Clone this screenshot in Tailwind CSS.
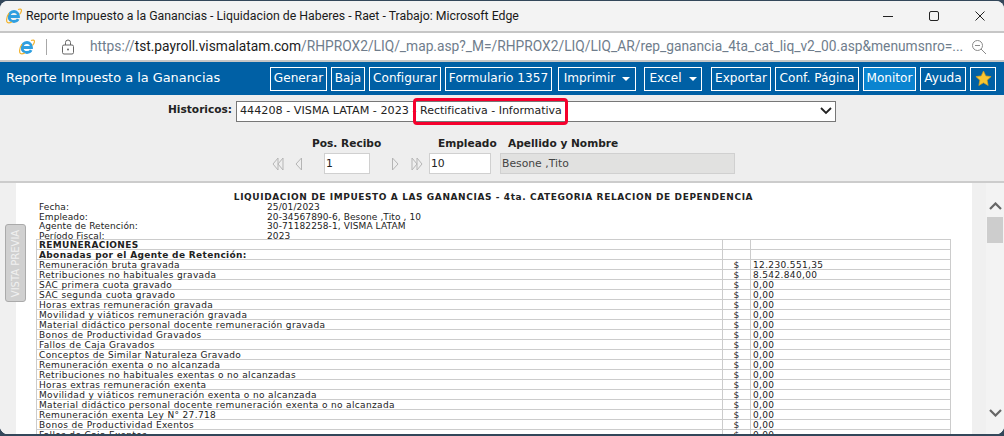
<!DOCTYPE html>
<html lang="es">
<head>
  <meta charset="UTF-8" />
  <title>Reporte Impuesto a la Ganancias</title>
  <script src="https://cdn.jsdelivr.net/npm/@tailwindcss/browser@4"></script>
</head>
<body class="bg-[#33475a] overflow-hidden">
  <div class="w-[1004px] h-[436px] pt-[1px] pb-[2px] overflow-hidden">
    <div class="relative h-full flex flex-col bg-white rounded-[8px] overflow-hidden font-['DejaVu_Sans',sans-serif]">

      <!-- Title bar -->
      <div class="h-[30px] shrink-0 bg-[#f3f3f3] flex items-center pl-[6px] font-['Roboto',sans-serif] text-[12.3px] text-[#1a1a1a]">
        <svg class="w-[16px] h-[16px] mr-[4px] shrink-0" viewBox="0 0 16 16" fill="none">
          <path d="M3 8.500h9.500C12.500 5.500 10.500 3.500 8 3.500S3.200 5.500 3 8.500c-.1 3 2 5 5 5 2 0 3.400-.8 4.200-2.300" stroke="#2f9fe0" stroke-width="2.800"/>
          <path d="M12 1.500c2-.8 3.500-.5 3.500 1 0 1-.8 2.500-2 4M3 5C1 8 .2 11 .8 13.500c.6 2 3 1.500 5 .5" stroke="#f2b431" stroke-width="1.200"/>
        </svg>
        <span class="whitespace-nowrap">Reporte Impuesto a la Ganancias - Liquidacion de Haberes - Raet - Trabajo: Microsoft Edge</span>
        <div class="ml-auto flex items-center gap-[34px] mr-[18px]">
          <svg class="w-[12px] h-[12px]" viewBox="0 0 12 12"><path d="M1 6.500h10" stroke="#222" stroke-width="1"/></svg>
          <svg class="w-[12px] h-[12px]" viewBox="0 0 12 12" fill="none"><rect x="1.500" y="1.500" width="9" height="9" rx="1.500" stroke="#222"/></svg>
          <svg class="w-[12px] h-[12px]" viewBox="0 0 12 12"><path d="M1.500 1.500l9 9M10.500 1.500l-9 9" stroke="#222"/></svg>
        </div>
      </div>

      <!-- Address bar -->
      <div class="h-[31px] shrink-0 bg-white border-y-2 border-[#c6c6c6] flex items-center font-['Roboto',sans-serif] text-[13.77px] text-[#6f7d8c]">
        <svg class="w-[16px] h-[16px] ml-[19px] shrink-0" viewBox="0 0 16 16" fill="none">
          <path d="M3 8.500h9.500C12.500 5.500 10.500 3.500 8 3.500S3.200 5.500 3 8.500c-.1 3 2 5 5 5 2 0 3.400-.8 4.200-2.300" stroke="#2f9fe0" stroke-width="2.800"/>
          <path d="M12 1.500c2-.8 3.500-.5 3.500 1 0 1-.8 2.500-2 4M3 5C1 8 .2 11 .8 13.500c.6 2 3 1.500 5 .5" stroke="#f2b431" stroke-width="1.200"/>
        </svg>
        <div class="w-px h-[16px] bg-[#a8a8a8] ml-[11px] shrink-0"></div>
        <svg class="w-[14px] h-[16px] ml-[14px] shrink-0" viewBox="0 0 14 16" fill="none">
          <rect x="1.500" y="6" width="11" height="9" rx="1.500" stroke="#666"/>
          <path d="M4.500 6V3.500a2.500 2.500 0 0 1 5 0V6" stroke="#666"/>
          <circle cx="7" cy="10.500" r="1" fill="#666"/>
        </svg>
        <span class="ml-[15px] w-[870px] shrink-0 whitespace-nowrap">https://<span class="text-[#1c1c1c]">tst.payroll.vismalatam.com</span>/RHPROX2/LIQ/_map.asp?_M=/RHPROX2/LIQ/LIQ_AR/rep_ganancia_4ta_cat_liq_v2_00.asp&amp;menumsnro=...</span>
        <svg class="w-[16px] h-[16px] ml-auto mr-[17px] shrink-0" viewBox="0 0 16 16" fill="none">
          <circle cx="6.500" cy="6.500" r="5" stroke="#8a8a8a"/>
          <path d="M10 10l5 5M4 6.500h5" stroke="#8a8a8a"/>
        </svg>
      </div>

      <!-- Blue toolbar -->
      <div class="h-[33px] shrink-0 bg-[#0060a5] flex items-center pl-[6px] text-white">
        <span class="text-[12.9px] w-[264px] shrink-0 -mt-[1px] whitespace-nowrap">Reporte Impuesto a la Ganancias</span>
        <div class="flex items-center text-[12.1px] [&>div]:h-[24px] [&>div]:shrink-0 [&>div]:border [&>div]:border-white [&>div]:flex [&>div]:items-center [&>div]:justify-center [&>div]:whitespace-nowrap">
          <div class="w-[57px]">Generar</div>
          <div class="w-[34px] ml-[4px]">Baja</div>
          <div class="w-[72px] ml-[4px]">Configurar</div>
          <div class="w-[107px] ml-[4px]">Formulario 1357</div>
          <div class="w-[78px] ml-[6px]">Imprimir<span class="ml-[7px] border-x-[4px] border-x-transparent border-t-[4px] border-t-white"></span></div>
          <div class="w-[58px] ml-[8px]">Excel<span class="ml-[7px] border-x-[4px] border-x-transparent border-t-[4px] border-t-white"></span></div>
          <div class="w-[60px] ml-[9px]">Exportar</div>
          <div class="w-[84px] ml-[4px]">Conf. Página</div>
          <div class="w-[53px] ml-[4px] bg-[#0a84d0]">Monitor</div>
          <div class="w-[46px] ml-[4px]">Ayuda</div>
          <div class="w-[26px] ml-[4px]">
            <svg class="w-[17px] h-[17px]" viewBox="0 0 24 24"><path d="M12 1.500l3.200 6.900 7.500.9-5.600 5.100 1.500 7.400L12 18.100l-6.600 3.700 1.500-7.400L1.300 9.300l7.500-.9z" fill="#f8c532" stroke="#d9a01e" stroke-width="1"/></svg>
          </div>
        </div>
      </div>

      <!-- Filters -->
      <div class="h-[88px] shrink-0 bg-[#eeeeee] border-b-2 border-[#cccccc] text-[#222]">
        <div class="flex items-center pt-[6px] pl-[168px]">
          <label class="w-[68px] text-[10.6px] font-bold -mt-[4px] whitespace-nowrap">Historicos:</label>
          <div class="relative w-[600px] h-[21px] flex items-center bg-white border border-[#777] pl-[3px] whitespace-nowrap">
            <span class="w-[180px] text-[11.2px]">444208 - VISMA LATAM - 2023 -</span>
            <span class="text-[11px]">Rectificativa - Informativa</span>
            <svg class="absolute right-[3px] top-[5px] w-[12px] h-[8px]" viewBox="0 0 12 8" fill="none"><path d="M1 1l5 5 5-5" stroke="#222" stroke-width="1.800"/></svg>
            <!-- highlight drawn over the select -->
            <div class="absolute left-[176px] -top-[4px] w-[155px] h-[27px] border-[3px] border-[#f5002d] rounded-[4px]"></div>
          </div>
        </div>

        <div class="flex items-end mt-[18px] h-[12px] text-[10.6px] font-bold whitespace-nowrap">
          <span class="ml-[312px] w-[126px]">Pos. Recibo</span>
          <span class="w-[70px]">Empleado</span>
          <span>Apellido y Nombre</span>
        </div>

        <div class="flex items-center mt-[1px] pl-[272px] text-[10.8px]">
          <svg class="w-[12px] h-[14px]" viewBox="0 0 12 14" fill="#eee" stroke="#b5b5b5"><path d="M6 1L1 7l5 6zM11 1L6 7l5 6z"/></svg>
          <svg class="w-[8px] h-[14px] ml-[11px]" viewBox="0 0 8 14" fill="#eee" stroke="#b5b5b5"><path d="M6.500 1L1 7l5.500 6z"/></svg>
          <input class="w-[46px] h-[21px] ml-[21px] px-[1px] bg-white border border-[#d0d0d0] text-[#222] outline-none" value="1" />
          <svg class="w-[8px] h-[14px] ml-[21px]" viewBox="0 0 8 14" fill="#eee" stroke="#b5b5b5"><path d="M1.500 1L7 7l-5.500 6z"/></svg>
          <svg class="w-[12px] h-[14px] ml-[12px]" viewBox="0 0 12 14" fill="#eee" stroke="#b5b5b5"><path d="M1 1l5 6-5 6zM6 1l5 6-5 6z"/></svg>
          <input class="w-[62px] h-[21px] ml-[6px] px-[1px] bg-white border border-[#d0d0d0] text-[#222] outline-none" value="10" />
          <input class="w-[235px] h-[21px] ml-[9px] px-[1px] bg-[#e1e1e0] border border-[#d0d0d0] text-[#444] outline-none" value="Besone ,Tito" readonly />
        </div>
      </div>

      <!-- Report area -->
      <div class="relative flex-1 min-h-0 flex overflow-hidden bg-white">
        <div class="w-[16px] shrink-0 bg-[#f0f0f0]"></div>
        <div class="flex-1 min-w-0 overflow-hidden pl-[20px] pt-[9px] text-[9px] leading-[10px] text-[#222]">
          <div class="w-[915px] text-center font-bold tracking-[0.6px] whitespace-nowrap">LIQUIDACION DE IMPUESTO A LAS GANANCIAS - 4ta. CATEGORIA RELACION DE DEPENDENCIA</div>
          <div class="grid grid-cols-[228px_1fr] mt-[1px] pl-[3px] leading-[9.500px] tracking-[0.1px]">
            <span>Fecha:</span><span>25/01/2023</span>
            <span>Empleado:</span><span>20-34567890-6, Besone ,Tito , 10</span>
            <span>Agente de Retención:</span><span>30-71182258-1, VISMA LATAM</span>
            <span>Período Fiscal:</span><span>2023</span>
          </div>
          <table class="-mt-[2px] w-[915px] table-fixed border-collapse tracking-[0.35px] [&_td]:border [&_td]:border-[#cccccc] [&_td]:p-0 [&_td]:pt-[1px] [&_td]:h-[10px] [&_td]:leading-[8px] [&_td:nth-child(1)]:pl-[2px] [&_td:nth-child(2)]:text-center [&_td:nth-child(3)]:pl-[2px]">
            <colgroup><col class="w-[686px]" /><col class="w-[28px]" /><col /></colgroup>
            <tbody>
              <tr><td class="font-bold">REMUNERACIONES</td><td></td><td></td></tr>
              <tr><td class="font-bold">Abonadas por el Agente de Retención:</td><td></td><td></td></tr>
              <tr><td>Remuneración bruta gravada</td><td>$</td><td>12.230.551,35</td></tr>
              <tr><td>Retribuciones no habituales gravada</td><td>$</td><td>8.542.840,00</td></tr>
              <tr><td>SAC primera cuota gravado</td><td>$</td><td>0,00</td></tr>
              <tr><td>SAC segunda cuota gravado</td><td>$</td><td>0,00</td></tr>
              <tr><td>Horas extras remuneración gravada</td><td>$</td><td>0,00</td></tr>
              <tr><td>Movilidad y viáticos remuneración gravada</td><td>$</td><td>0,00</td></tr>
              <tr><td>Material didáctico personal docente remuneración gravada</td><td>$</td><td>0,00</td></tr>
              <tr><td>Bonos de Productividad Gravados</td><td>$</td><td>0,00</td></tr>
              <tr><td>Fallos de Caja Gravados</td><td>$</td><td>0,00</td></tr>
              <tr><td>Conceptos de Similar Naturaleza Gravado</td><td>$</td><td>0,00</td></tr>
              <tr><td>Remuneración exenta o no alcanzada</td><td>$</td><td>0,00</td></tr>
              <tr><td>Retribuciones no habituales exentas o no alcanzadas</td><td>$</td><td>0,00</td></tr>
              <tr><td>Horas extras remuneración exenta</td><td>$</td><td>0,00</td></tr>
              <tr><td>Movilidad y viáticos remuneración exenta o no alcanzada</td><td>$</td><td>0,00</td></tr>
              <tr><td>Material didáctico personal docente remuneración exenta o no alcanzada</td><td>$</td><td>0,00</td></tr>
              <tr><td>Remuneración exenta Ley N° 27.718</td><td>$</td><td>0,00</td></tr>
              <tr><td>Bonos de Productividad Exentos</td><td>$</td><td>0,00</td></tr>
              <tr><td>Fallos de Caja Exentos</td><td>$</td><td>0,00</td></tr>
            </tbody>
          </table>
        </div>

        <!-- Gutter and scrollbar -->
        <div class="w-[14px] shrink-0 bg-[#f0f0f0]"></div>
        <div class="w-[18px] shrink-0 bg-[#f3f3f3] flex flex-col items-center pt-[19px]">
          <svg class="w-[13px] h-[8px] shrink-0" viewBox="0 0 13 8" fill="none"><path d="M1 7l5.500-5.500L12 7" stroke="#666" stroke-width="2.200"/></svg>
          <div class="w-[16px] h-[26px] mt-[7px] shrink-0 bg-[#cdcdcd]"></div>
          <svg class="w-[13px] h-[8px] mt-[166px] shrink-0" viewBox="0 0 13 8" fill="none"><path d="M1 1l5.500 5.500L12 1" stroke="#666" stroke-width="2.200"/></svg>
        </div>

        <!-- VISTA PREVIA tab floats over the left edge -->
        <div class="absolute left-[5px] top-[41px] w-[21px] h-[78px] bg-[#d0d0d0] border border-[#aaaaaa] rounded-[3px] flex items-center justify-center">
          <span class="-rotate-90 whitespace-nowrap text-[10px] text-[#f0f0f0]">VISTA PREVIA</span>
        </div>
      </div>
    </div>
  </div>
</body>
</html>
